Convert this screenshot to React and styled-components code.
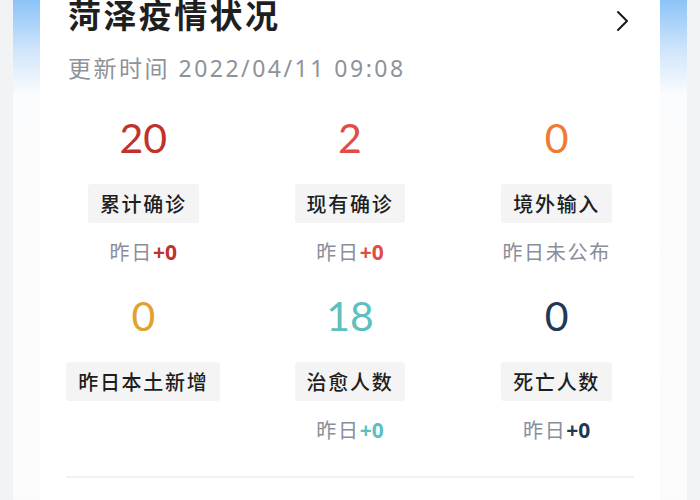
import React from 'react';
import styled, { createGlobalStyle } from 'styled-components';

const GlobalStyle = createGlobalStyle`
	html, body {
		margin: 0;
		padding: 0;
		background: #f2f3f5;
		font-family: 'Noto Sans', 'Noto Sans CJK SC', sans-serif;
	}
`;

const Page = styled.div`
	height: 500px;
	overflow: hidden;
	padding: 0 13px;
`;

const Backdrop = styled.div`
	height: 100%;
	padding: 0 27px;
	background: linear-gradient(180deg, #8cc3f7 0px, #cfe5fb 50px, #fbfcfd 95px, #fbfbfc 100%);
`;

const Card = styled.section`
	height: 100%;
	background: #ffffff;
	display: flex;
	flex-direction: column;
`;

const Header = styled.div`
	display: flex;
	align-items: center;
	justify-content: space-between;
	padding: 0 28px 0 28px;
	height: 34px;
	margin-top: -3px;
`;

const Title = styled.h1`
	margin: 0;
	font-family: 'Noto Sans CJK SC', sans-serif;
	font-size: 33px;
	line-height: 34px;
	font-weight: 600;
	letter-spacing: 2.4px;
	color: #1f1f1f;
`;

const Chevron = styled.svg`
	width: 14px;
	height: 22px;
	margin-top: 13px;
	margin-right: 2px;
`;

const Updated = styled.div`
	margin-top: 22px;
	padding-left: 28px;
	font-family: 'Noto Sans', 'Noto Sans CJK SC', sans-serif;
	font-size: 23px;
	line-height: 30px;
	letter-spacing: 2.5px;
	color: #8e9299;
`;

const Grid = styled.div`
	display: grid;
	grid-template-columns: repeat(3, 1fr);
	row-gap: 26px;
	margin-top: 31px;
`;

const Stat = styled.div`
	display: flex;
	flex-direction: column;
	align-items: center;
`;

const Value = styled.div`
	font-family: 'Lato', 'Noto Sans', sans-serif;
	font-size: 41px;
	line-height: 48px;
	font-weight: 400;
	color: ${(p) => p.$color};
`;

const Label = styled.div`
	margin-top: 22px;
	height: 39px;
	padding: 0 12px;
	display: flex;
	align-items: center;
	background: #f4f4f5;
	border-radius: 3px;
	font-family: 'Noto Sans CJK SC', sans-serif;
	font-size: 20px;
	font-weight: 500;
	letter-spacing: 1.7px;
	color: #1e1e1e;
`;

const Delta = styled.div`
	margin-top: 15px;
	height: 28px;
	font-family: 'Noto Sans CJK SC', sans-serif;
	font-size: 20px;
	line-height: 28px;
	letter-spacing: 1.7px;
	color: #898e9a;
`;

const DeltaValue = styled.span`
	font-family: 'Noto Sans', sans-serif;
	font-size: 21px;
	font-weight: 700;
	letter-spacing: 0;
	color: ${(p) => p.$color};
`;

const Divider = styled.hr`
	margin: 32px 26px 0;
	border: 0;
	height: 2px;
	background: #f1f1f2;
`;

const stats = [
	{ value: '20', label: '累计确诊', color: '#c0322c', delta: '+0' },
	{ value: '2', label: '现有确诊', color: '#e24b46', delta: '+0' },
	{ value: '0', label: '境外输入', color: '#ef7a33', text: '昨日未公布' },
	{ value: '0', label: '昨日本土新增', color: '#e3a12f' },
	{ value: '18', label: '治愈人数', color: '#5cc0c0', delta: '+0' },
	{ value: '0', label: '死亡人数', color: '#1f3a55', delta: '+0' },
];

const App = () => (
	<>
		<GlobalStyle />
		<Page>
			<Backdrop>
				<Card>
					<Header>
						<Title>菏泽疫情状况</Title>
						<Chevron viewBox="0 0 14 22">
							<polyline points="2,2 11,11 2,20" fill="none" stroke="#1a1a1a" strokeWidth="2" strokeLinecap="round" strokeLinejoin="round" />
						</Chevron>
					</Header>
					<Updated>更新时间 2022/04/11 09:08</Updated>
					<Grid>
						{stats.map((s, i) => (
							<Stat key={i}>
								<Value $color={s.color}>{s.value}</Value>
								<Label>{s.label}</Label>
								<Delta>
									{s.text}
									{s.delta && (
										<>
											昨日<DeltaValue $color={s.color}>{s.delta}</DeltaValue>
										</>
									)}
								</Delta>
							</Stat>
						))}
					</Grid>
					<Divider />
				</Card>
			</Backdrop>
		</Page>
	</>
);

export default App;
